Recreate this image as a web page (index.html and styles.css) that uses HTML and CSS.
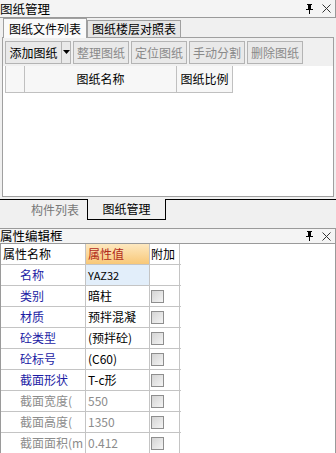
FILE: index.html
```html
<!DOCTYPE html>
<html>
<head>
<meta charset="utf-8">
<link rel="stylesheet" href="styles.css">
</head>
<body>
<div class="app">
  <div class="titlebar">
    <span class="title">图纸管理</span>
    <span class="tb-icons">
      <svg class="pin" width="9" height="10" viewBox="0 0 9 10"><path d="M2 0h5v1h-1v4h2v1h-3v4h-1v-4h-3v-1h2v-4h-1z" fill="#000"/></svg>
      <svg class="close" width="9" height="9" viewBox="0 0 9 9"><path d="M0.5 0.5L8.5 8.5M8.5 0.5L0.5 8.5" stroke="#333" stroke-width="1"/></svg>
    </span>
  </div>
  <div class="tabs">
    <div class="tab sel">图纸文件列表</div>
    <div class="tab">图纸楼层对照表</div>
  </div>
  <div class="panel">
    <div class="toolbar">
      <div class="btn split"><span class="btn-main">添加图纸</span><span class="btn-drop"><svg width="7" height="4" viewBox="0 0 7 4"><path d="M0 0h7l-3.5 4z" fill="#000"/></svg></span></div>
      <div class="btn dis">整理图纸</div>
      <div class="btn dis">定位图纸</div>
      <div class="btn dis">手动分割</div>
      <div class="btn dis">删除图纸</div>
    </div>
    <div class="thead">
      <div class="th c0"></div>
      <div class="th c1">图纸名称</div>
      <div class="th c2">图纸比例</div>
    </div>
  </div>
  <div class="btabs">
    <div class="btab">构件列表</div>
    <div class="btab sel">图纸管理</div>
    <div class="btab-rest"></div>
  </div>
  <div class="titlebar t2">
    <span class="title">属性编辑框</span>
    <span class="tb-icons">
      <svg class="pin" width="9" height="10" viewBox="0 0 9 10"><path d="M2 0h5v1h-1v4h2v1h-3v4h-1v-4h-3v-1h2v-4h-1z" fill="#000"/></svg>
      <svg class="close" width="9" height="9" viewBox="0 0 9 9"><path d="M0.5 0.5L8.5 8.5M8.5 0.5L0.5 8.5" stroke="#333" stroke-width="1"/></svg>
    </span>
  </div>
  <div class="props">
    <div class="grid">
      <div class="row head">
        <div class="cn">属性名称</div>
        <div class="cv hv">属性值</div>
        <div class="ca">附加</div>
      </div>
      <div class="row">
        <div class="cn blue">名称</div>
        <div class="cv selv">YAZ32</div>
        <div class="ca"></div>
      </div>
      <div class="row">
        <div class="cn blue">类别</div>
        <div class="cv">暗柱</div>
        <div class="ca"><span class="chk"></span></div>
      </div>
      <div class="row">
        <div class="cn blue">材质</div>
        <div class="cv">预拌混凝</div>
        <div class="ca"><span class="chk"></span></div>
      </div>
      <div class="row">
        <div class="cn blue">砼类型</div>
        <div class="cv">(预拌砼)</div>
        <div class="ca"><span class="chk"></span></div>
      </div>
      <div class="row">
        <div class="cn blue">砼标号</div>
        <div class="cv">(C60)</div>
        <div class="ca"><span class="chk"></span></div>
      </div>
      <div class="row">
        <div class="cn blue">截面形状</div>
        <div class="cv">T-c形</div>
        <div class="ca"><span class="chk"></span></div>
      </div>
      <div class="row">
        <div class="cn gray">截面宽度(</div>
        <div class="cv gray">550</div>
        <div class="ca"><span class="chk"></span></div>
      </div>
      <div class="row">
        <div class="cn gray">截面高度(</div>
        <div class="cv gray">1350</div>
        <div class="ca"><span class="chk"></span></div>
      </div>
      <div class="row">
        <div class="cn gray">截面面积(m</div>
        <div class="cv gray">0.412</div>
        <div class="ca"><span class="chk"></span></div>
      </div>
    </div>
  </div>
</div>
</body>
</html>
```

FILE: styles.css
```css
* { box-sizing: border-box; }
html, body { margin: 0; padding: 0; }
body {
  width: 336px;
  height: 453px;
  overflow: hidden;
  background: #f0f0f0;
  font-family: "Noto Sans CJK SC", "Liberation Sans", sans-serif;
  font-size: 12px;
  color: #000;
}
.app { display: flex; flex-direction: column; height: 453px; }

.titlebar {
  height: 18px;
  flex: none;
  display: flex;
  align-items: center;
  justify-content: space-between;
  background: #f4f4f4;
  border-bottom: 1px solid #9a9a9a;
  border-right: 1px solid #9a9a9a;
}
.title { font-size: 12.5px; line-height: 17px; }
.tb-icons { display: flex; align-items: center; gap: 8px; padding-right: 4px; }

.tabs {
  height: 19px;
  flex: none;
  display: flex;
  align-items: flex-end;
  padding-left: 3px;
}
.tab {
  height: 17px;
  padding: 0 3px;
  border: 1px solid #a0a0a0;
  border-bottom: none;
  background: #e6e6e6;
  line-height: 16px;
  width: 94px;
  text-align: center;
}
.tab.sel {
  height: 20px;
  width: 84px;
  background: #fafafa;
  line-height: 19px;
  margin-bottom: -1px;
  position: relative;
  z-index: 1;
}

.panel {
  height: 160px;
  flex: none;
  margin: 0 2px;
  border: 1px solid #a0a0a0;
  background: #fff;
  display: flex;
  flex-direction: column;
}
.toolbar {
  height: 28px;
  display: flex;
  align-items: center;
  gap: 2px;
  padding-left: 2px;
  background: #f0f0f0;
}
.btn {
  height: 23px;
  width: 56px;
  border: 1px solid #b4b4b4;
  background: #e9e9e9;
  line-height: 21px;
  text-align: center;
  color: #8a8a8a;
}
.btn.split {
  width: 66px;
  display: flex;
  color: #000;
  padding: 0;
}
.btn-main { width: 56px; }
.btn-drop {
  width: 9px;
  border-left: 1px solid #b4b4b4;
  display: flex;
  align-items: center;
  justify-content: center;
}
.thead {
  height: 27px;
  display: flex;
  padding-left: 2px;
}
.th {
  border-right: 1px solid #c0c0c0;
  border-bottom: 1px solid #c0c0c0;
  background: #f7f7f7;
  text-align: center;
  line-height: 25px;
}
.th.c0 { width: 20px; border-left: 1px solid #c0c0c0; }
.th.c1 { width: 152px; }
.th.c2 { width: 56px; }

.btabs {
  height: 31px;
  flex: none;
  display: flex;
  align-items: flex-start;
  padding-top: 2px;
}
.btab {
  height: 20px;
  width: 87px;
  border-top: 1px solid #000;
  text-align: right;
  padding-right: 8px;
  color: #777;
  line-height: 19px;
}
.btab.sel {
  width: 79px;
  border-top: none;
  border-left: 1px solid #000;
  border-right: 1px solid #000;
  border-bottom: 1px solid #000;
  text-align: center;
  padding-right: 0;
  color: #000;
  background: #f0f0f0;
  height: 21px;
}
.btab-rest { flex: 1; border-top: 1px solid #000; height: 20px; }

.t2 { border-top: 1px solid #9a9a9a; height: 16px; }
.t2 .title { line-height: 14px; }

.props {
  flex: 1;
  background: #fff;
  border-right: 1px solid #9a9a9a;
  border-left: 1px solid #9a9a9a;
}
.grid { width: 180px; }
.row {
  display: flex;
  height: 21px;
  border-bottom: 1px solid #c4c4c4;
}
.row.head { height: 21px; }
.cn {
  width: 84px;
  padding-left: 19px;
  line-height: 20px;
  white-space: nowrap;
  overflow: hidden;
}
.head .cn { padding-left: 2px; }
.cv {
  width: 64px;
  border-left: 1px solid #c4c4c4;
  padding-left: 2px;
  line-height: 20px;
  white-space: nowrap;
  overflow: hidden;
}
.ca {
  width: 31px;
  border-left: 1px solid #c4c4c4;
  border-right: 1px solid #c4c4c4;
  padding-left: 1px;
  display: flex;
  align-items: center;
  line-height: 20px;
}
.hv {
  background: linear-gradient(#fde8c0, #f8c878);
  color: #b22a1a;
}
.selv { background: #e2eefa; font-size: 11px; }
.blue { color: #1c1ca4; }
.gray { color: #8c8c8c; }
.chk {
  width: 13px;
  height: 13px;
  border: 1px solid #8e8e8e;
  background: linear-gradient(135deg, #d4d4d4, #f4f4f4);
  display: block;
}
```
